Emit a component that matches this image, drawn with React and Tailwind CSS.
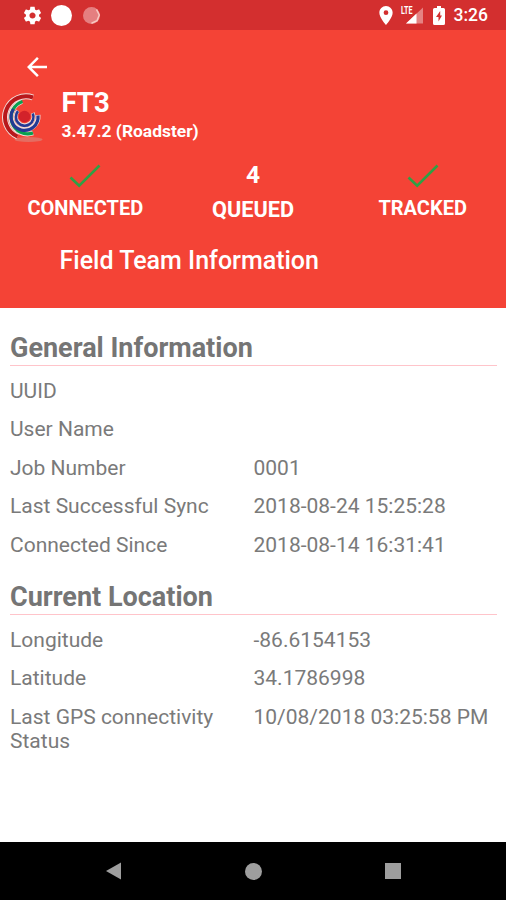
const FONT = "font-['Roboto','Liberation_Sans',sans-serif]";

function StatusBar() {
  return (
    <div className="flex h-[30px] items-center justify-between bg-[#d32f2f] pr-[18px] pl-[22px]">
      <div className="flex items-center">
        <svg className="size-[21px]" viewBox="0 0 24 24" fill="#fff">
          <path d="M19.43 12.98c.04-.32.07-.64.07-.98s-.03-.66-.07-.98l2.11-1.65c.19-.15.24-.42.12-.64l-2-3.46c-.12-.22-.39-.3-.61-.22l-2.49 1c-.52-.4-1.08-.73-1.69-.98l-.38-2.65C14.46 2.18 14.25 2 14 2h-4c-.25 0-.46.18-.49.42l-.38 2.65c-.61.25-1.17.59-1.69.98l-2.49-1c-.23-.09-.49 0-.61.22l-2 3.46c-.13.22-.07.49.12.64l2.11 1.65c-.04.32-.07.65-.07.98s.03.66.07.98l-2.11 1.65c-.19.15-.24.42-.12.64l2 3.46c.12.22.39.3.61.22l2.49-1c.52.4 1.08.73 1.69.98l.38 2.65c.03.24.24.42.49.42h4c.25 0 .46-.18.49-.42l.38-2.65c.61-.25 1.17-.59 1.69-.98l2.49 1c.23.09.49 0 .61-.22l2-3.46c.12-.22.07-.49-.12-.64l-2.11-1.65zM12 15.5c-1.93 0-3.5-1.57-3.5-3.5s1.57-3.5 3.5-3.5 3.5 1.57 3.5 3.5-1.57 3.5-3.5 3.5z" />
        </svg>
        <div className="ml-[8px] size-[21px] rounded-full bg-white" />
        <svg className="ml-[10px] size-[19px]" viewBox="0 0 19 19">
          <circle cx="9.500" cy="9.500" r="8.500" fill="#e57f80" />
          <path d="M14.500 3.500 17.300 9 15 14.800 9.500 17.200" fill="none" stroke="#f8c9c2" strokeWidth="1.500" />
        </svg>
      </div>
      <div className="flex items-center">
        <svg className="h-[19px] w-[14px]" viewBox="5 2 14 20" fill="#fff">
          <path fillRule="evenodd" d="M12 2C8.130 2 5 5.130 5 9c0 5.250 7 13 7 13s7-7.750 7-13c0-3.870-3.130-7-7-7zm0 9.500a2.500 2.500 0 0 1 0-5 2.500 2.500 0 0 1 0 5z" />
        </svg>
        <svg className="ml-[7px] h-[20px] w-[24px]" viewBox="0 0 24 20">
          <path d="M6 18.500 23 2.500V18.500Z" fill="#e58282" />
          <path d="M6 18.500 16.500 8.500V18.500Z" fill="#fff" />
          <path d="M0 0H12.500V10H0Z" fill="#d32f2f" />
          <text x="1" y="9" fill="#fff" fontFamily="Roboto" fontWeight="700" fontSize="10" textLength="11.500" lengthAdjust="spacingAndGlyphs">LTE</text>
        </svg>
        <svg className="ml-[9px] h-[19px] w-[12px]" viewBox="0 0 12 19">
          <path d="M4 0H8V2H10.500Q12 2 12 3.500V17.500Q12 19 10.500 19H1.500Q0 19 0 17.500V3.500Q0 2 1.500 2H4Z" fill="#fff" />
          <path d="M7.200 5 3 11H5.500V15.500L9 9.500H7.200Z" fill="#d32f2f" />
        </svg>
        <span className="ml-[9px] pt-[2px] text-[17.500px] leading-none font-medium text-white">3:26</span>
      </div>
    </div>
  );
}

function Logo() {
  return (
    <svg className="h-[50px] w-[46px] shrink-0" viewBox="0.500 0 46 50" fill="none">
      <ellipse cx="29" cy="46.500" rx="14" ry="2.500" fill="#d98a80" opacity=".6" />
      <g stroke="#f0dcd8">
        <path d="M33.500 4.500A21 21 0 0 0 18 43.500" strokeWidth="6" />
        <path d="M22.500 8.500A16.500 16.500 0 1 0 33.500 40" strokeWidth="5" />
        <path d="M13.800 15.700A13.500 13.500 0 1 0 38.500 22" strokeWidth="5" />
        <path d="M18.300 17.800A8.800 8.800 0 1 0 33.300 20" strokeWidth="4" />
      </g>
      <path d="M33.500 4.500A21 21 0 0 0 18 43.500" stroke="#b8181c" strokeWidth="4" />
      <path d="M23 8.500A16.500 16.500 0 1 0 33.500 40" stroke="#08a050" strokeWidth="3.200" />
      <path d="M14 16.200A13.500 13.500 0 1 0 38.500 22.500" stroke="#243a94" strokeWidth="3.200" />
      <path d="M18.500 18.200A8.800 8.800 0 1 0 33.300 20.500" stroke="#243a94" strokeWidth="2.600" />
      <circle cx="25" cy="23.500" r="5.800" fill="#d3222a" />
    </svg>
  );
}

function Check() {
  return (
    <svg className="h-[24px] w-[32px]" viewBox="0 0 32 24" fill="none" stroke="#2fa045" strokeWidth="2.600">
      <path d="M1.500 13.500 10.200 21.700 30.500 1.500" />
    </svg>
  );
}

function Header() {
  return (
    <header className="flex h-[278px] flex-col bg-[#f44336] text-white">
      <svg className="mt-[22px] ml-[22px] size-[30px] shrink-0" viewBox="0 0 24 24" fill="#fff">
        <path d="M20 11H7.830l5.590-5.590L12 4l-8 8 8 8 1.410-1.410L7.830 13H20v-2z" />
      </svg>
      <div className="mt-[6px] flex h-[60px] items-center">
        <Logo />
        <div className="ml-[15.500px] pb-[5px]">
          <div className="text-[27.500px] leading-[30px] font-bold">FT3</div>
          <div className="text-[17.400px] leading-[26px] font-bold">3.47.2 (Roadster)</div>
        </div>
      </div>
      <div className="mt-[11px] grid h-[66px] grid-cols-3 text-center text-[20px] font-bold">
        <div className="flex flex-col items-center pt-[5px] pl-[2px]">
          <Check />
          <span className="mt-[8px] leading-[24px]">CONNECTED</span>
        </div>
        <div className="flex flex-col items-center pt-[2px]">
          <span className="text-[24.500px] leading-[28px]">4</span>
          <span className="mt-[9px] text-[21.700px] leading-[24px]">QUEUED</span>
        </div>
        <div className="flex flex-col items-center pt-[5px] pl-[2px]">
          <Check />
          <span className="mt-[8px] leading-[24px]">TRACKED</span>
        </div>
      </div>
      <h1 className="mt-[21px] ml-[59.500px] text-[25px] leading-[30px] font-medium">Field Team Information</h1>
    </header>
  );
}

function Section({ title, rows }) {
  return (
    <section>
      <h2 className="h-[34px] border-b border-[#ffc4ca] text-[27px] leading-[32px] font-bold">{title}</h2>
      <dl className="pt-[6px] text-[#7a7a7a]">
        {rows.map(([label, value]) => (
          <div key={label} className="grid grid-cols-[243.500px_1fr] py-[7px] text-[21px] leading-[24.400px]">
            <dt>{label}</dt>
            <dd className="whitespace-nowrap">{value}</dd>
          </div>
        ))}
      </dl>
    </section>
  );
}

const general = [
  ["UUID", ""],
  ["User Name", ""],
  ["Job Number", "0001"],
  ["Last Successful Sync", "2018-08-24 15:25:28"],
  ["Connected Since", "2018-08-14 16:31:41"],
];

const location = [
  ["Longitude", "-86.6154153"],
  ["Latitude", "34.1786998"],
  ["Last GPS connectivity Status", "10/08/2018 03:25:58 PM"],
];

function NavBar() {
  return (
    <nav className="flex h-[58px] items-center justify-between bg-black pr-[105px] pl-[104px]">
      <svg className="size-[18px]" viewBox="0 0 18 18" fill="#9e9e9e">
        <path d="M2 9 17 .500V17.500Z" />
      </svg>
      <div className="size-[17px] rounded-full bg-[#9e9e9e]" />
      <div className="size-[16px] bg-[#9e9e9e]" />
    </nav>
  );
}

export default function App() {
  return (
    <div className={`flex h-[900px] w-[506px] flex-col overflow-hidden bg-white ${FONT}`}>
      <StatusBar />
      <Header />
      <main className="flex grow flex-col gap-[17px] pt-[24px] pr-[9px] pl-[10px] text-[#757575]">
        <Section title="General Information" rows={general} />
        <Section title="Current Location" rows={location} />
      </main>
      <NavBar />
    </div>
  );
}
